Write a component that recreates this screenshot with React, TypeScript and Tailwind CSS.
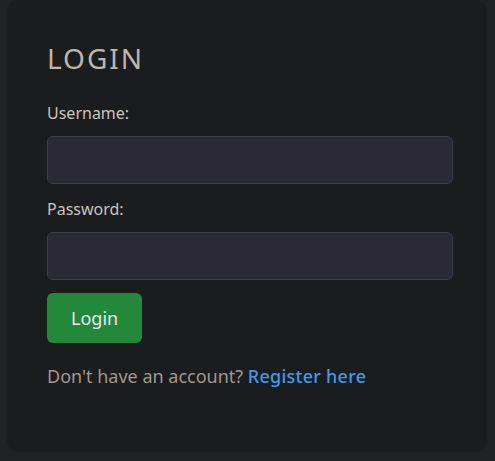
export default function App() {
  return (
    <div className="min-h-[461px] w-[495px] bg-[#1f2123] pb-[12px] font-['Noto_Sans',sans-serif]">
      <div className="ml-[7px] w-[480px] rounded-[12px] bg-[#1b1c1e] px-10 pt-[41px] pb-[62px]">
        <h2 className="mb-[26px] text-[28px] leading-[34px] tracking-[2px] text-[#bdb6ab]">LOGIN</h2>

        <form className="flex flex-col">
          <label className="mb-[11px] text-[16px] leading-6 text-[#c9c4bc]">Username:</label>
          <input
            type="text"
            className="mb-[13px] h-[48px] w-[406px] rounded-[6px] border border-[#3c3e44] bg-[#2b2a34] px-3 text-[#c9c4bc] outline-none"
          />

          <label className="mb-[11px] text-[16px] leading-6 text-[#c9c4bc]">Password:</label>
          <input
            type="password"
            className="mb-[13px] h-[48px] w-[406px] rounded-[6px] border border-[#3c3e44] bg-[#2b2a34] px-3 text-[#c9c4bc] outline-none"
          />

          <button
            type="button"
            className="w-fit rounded-[6px] bg-[#22883a] px-6 py-3 text-[18px] leading-[26px] text-[#e8ece9]"
          >
            Login
          </button>
        </form>

        <p className="mt-[20px] text-[18px] leading-[27px] text-[#9f9890]">
          Don't have an account? <a className="font-medium tracking-[0.25px] text-[#3a9cf0]">Register here</a>
        </p>
      </div>
    </div>
  );
}
